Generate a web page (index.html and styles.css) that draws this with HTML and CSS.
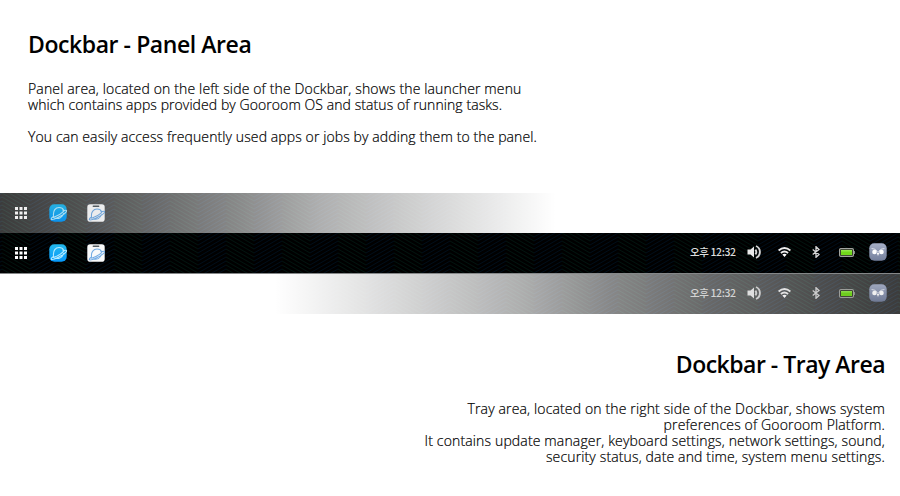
FILE: index.html
```
<!DOCTYPE html>
<html lang="en">
<head>
<meta charset="utf-8">
<title>Dockbar</title>
<link rel="stylesheet" href="styles.css">
</head>
<body>
<svg class="defs" width="0" height="0" aria-hidden="true">
  <defs>
    <linearGradient id="blue" x1="0" y1="0" x2="0" y2="1"><stop offset="0" stop-color="#23b9ed"/><stop offset="1" stop-color="#0698fb"/></linearGradient>
    <linearGradient id="owlbg" x1="0" y1="0" x2="0" y2="1"><stop offset="0" stop-color="#a6afc8"/><stop offset="1" stop-color="#747f9c"/></linearGradient>
    <pattern id="herringbone" x="30" width="56" height="4" patternUnits="userSpaceOnUse">
      <path d="M0 0L28 -16M0 4L28 -12M0 8L28 -8M0 12L28 -4M0 16L28 0M0 20L28 4" stroke="#000d1a"/>
      <path d="M28 0L56 16M28 4L56 20M28 -4L56 12M28 -8L56 8M28 -12L56 4M28 -16L56 0" stroke="#02140f"/>
    </pattern>
    <symbol id="grid" viewBox="0 0 12 12"><path d="M0 0h3v3H0zM4.500 0h3v3h-3zM9 0h3v3H9zM0 4.500h3v3H0zM4.500 4.500h3v3h-3zM9 4.500h3v3H9zM0 9h3v3H0zM4.500 9h3v3h-3zM9 9h3v3H9z" fill="#fff"/></symbol>
    <symbol id="planet" viewBox="0 0 18 18">
      <rect x=".3" y=".3" width="17.4" height="17.4" rx="5" fill="url(#blue)"/>
      <path d="M4.500 11.500C4 6.500 6.500 3.500 10 3.500c2.300 0 4 1.100 4.600 2.800M6 14.200c3.800 1.100 7.300-.8 8.600-4.700M14 6.800c2-.7 3.300-.8 3.700 0M17.500 7.500c-1 1.500-4.500 4-8.200 5.800C5.700 15 2.800 16.200 2.300 15.200c-.3-.7.6-1.700 2.200-2.800M4.300 13.500c3.700-1.200 7.700-3.400 10.400-6.100" fill="none" stroke="#b4eaff" stroke-width="1.150" stroke-linecap="round"/>
    </symbol>
    <symbol id="store" viewBox="0 0 18 18">
      <rect x=".3" y=".3" width="17.4" height="17.4" rx="2.800" fill="#f8f9fa"/>
      <rect x="5.600" y="1.600" width="6.800" height="1.400" rx=".7" fill="#555d63"/>
      <path d="M4.500 12.500C4 8 6.500 5 10 5c2.300 0 4 1 4.500 2.600M6.400 15c3.500 1 6.800-.8 8-4.300M14 7.800c2-.7 3.300-.8 3.700 0M17.500 8.500c-1 1.400-4.500 3.700-8.200 5.400-3.600 1.600-6.500 2.700-7 1.700-.3-.7.6-1.500 2.200-2.600M4.600 14.200c3.700-1.200 7.500-3.100 10.100-5.600" fill="none" stroke="#72abe4" stroke-width="1.050" stroke-linecap="round"/>
    </symbol>
    <symbol id="sound" viewBox="0 0 14 14"><path d="M.5 4.500h3L7 1.500v11L3.500 9.500h-3z" fill="#e9e9e9"/><path d="M8.400 4.600Q10.200 7 8.400 9.400M9 1c5.200 2.300 5.200 9.700 0 12" fill="none" stroke="#d6d6d6" stroke-width="1.900"/></symbol>
    <symbol id="wifi" viewBox="0 0 13 10"><g fill="none" stroke="#ededed" stroke-width="1.900"><path d="M.6 3.500Q6.500-1.300 12.400 3.500M2.900 5.900q3.600-2.900 7.200 0"/></g><path d="M4.300 7.500Q6.500 5.900 8.700 7.500L6.500 9.900z" fill="#fff"/></symbol>
    <symbol id="bluetooth" viewBox="0 0 8 12"><path d="M.7 3.400L7 8.500 4 11.300V.7l3 2.800L.7 8.600" fill="none" stroke="#d8d8d8" stroke-width="1.300"/></symbol>
    <symbol id="battery" viewBox="0 0 16 9"><rect x=".6" y=".6" width="13.800" height="7.800" rx="1.200" fill="#202a12" stroke="#a2a4a0" stroke-width="1.200"/><path d="M14.500 3h1.300v3h-1.300z" fill="#a2a4a0"/><path d="M2 2h11v5H2z" fill="#72d91b"/><path d="M2 2h11v1.500H2z" fill="#90e848"/></symbol>
    <symbol id="owl" viewBox="0 0 18 18"><rect x=".3" y=".3" width="17.400" height="17.400" rx="5" fill="url(#owlbg)"/><path d="M2.600 5.500Q6.500 5 9 9.500q2.500-4.500 6.400-4" fill="none" stroke="#dfe3ed" stroke-width="1"/><circle cx="5.500" cy="9" r="2.300" fill="#fff"/><circle cx="12.500" cy="9" r="2.300" fill="#fff"/><path d="M7.800 10h2.400L9 13z" fill="#fff"/></symbol>
  </defs>
</svg>

<section class="intro">
  <h2>Dockbar - Panel Area</h2>
  <p><span class="wide">Panel area, located on the left side of the Dockbar, shows the launcher menu</span><br><span class="tight">which contains apps provided by Gooroom OS and status of running tasks.</span></p>
  <p class="gap"><span class="mid">You can easily access frequently used apps or jobs by adding them to the panel.</span></p>
</section>

<div class="bars">
  <div class="bar bar-panel">
    <svg class="texture"><rect width="100%" height="100%" fill="url(#herringbone)"/></svg>
    <div class="launchers"><svg class="i-grid"><use href="#grid"/></svg><svg class="i-app"><use href="#planet"/></svg><svg class="i-app"><use href="#store"/></svg></div>
    <div class="fade"></div>
  </div>
  <div class="bar bar-full">
    <svg class="texture"><rect width="100%" height="100%" fill="url(#herringbone)"/></svg>
    <div class="launchers"><svg class="i-grid"><use href="#grid"/></svg><svg class="i-app"><use href="#planet"/></svg><svg class="i-app"><use href="#store"/></svg></div>
    <div class="tray"><span class="clock">오후 12:32</span><svg class="i-sound"><use href="#sound"/></svg><svg class="i-wifi"><use href="#wifi"/></svg><svg class="i-bt"><use href="#bluetooth"/></svg><svg class="i-bat"><use href="#battery"/></svg><svg class="i-app"><use href="#owl"/></svg></div>
  </div>
  <div class="bar bar-tray">
    <svg class="texture"><rect width="100%" height="100%" fill="url(#herringbone)"/></svg>
    <div class="fade"></div>
    <div class="tray"><span class="clock">오후 12:32</span><svg class="i-sound"><use href="#sound"/></svg><svg class="i-wifi"><use href="#wifi"/></svg><svg class="i-bt"><use href="#bluetooth"/></svg><svg class="i-bat"><use href="#battery"/></svg><svg class="i-app"><use href="#owl"/></svg></div>
  </div>
</div>

<section class="intro intro-tray">
  <h2>Dockbar - Tray Area</h2>
  <p><span class="wide">Tray area, located on the right side of the Dockbar, shows system</span><br><span class="wide">preferences of Gooroom Platform.</span><br><span class="wide">It contains update manager, keyboard settings, network settings, sound,</span><br><span class="wide">security status, date and time, system menu settings.</span></p>
</section>
</body>
</html>
```
FILE: styles.css
```
* { box-sizing: border-box; }
body { margin: 0; width: 900px; height: 496px; overflow: hidden; background: #fff; color: #000; font-family: "Open Sans", "Noto Sans", sans-serif; }
.defs { position: absolute; }
svg { display: block; flex: none; }

.intro { padding: 28px 28px 48px; white-space: nowrap; }
.intro-tray { padding: 34px 15px 0; text-align: right; }
h2 { margin: 0 0 21px; font-size: 23px; line-height: 32px; font-weight: 600; letter-spacing: -0.43px; }
.intro-tray h2 { letter-spacing: -0.5px; }
p { margin: 0; font-size: 14px; line-height: 16px; font-weight: 300; -webkit-text-stroke: 0.2px #000; }
.gap { margin-top: 16px; }
.wide { letter-spacing: 0.145px; }
.mid { letter-spacing: 0.105px; }
.tight { letter-spacing: 0.075px; }

.bar { position: relative; display: flex; align-items: flex-start; height: 40px; background: #000; }
.bar-full { height: 41px; border-bottom: 1px solid #858788; }
.bar-full .tray { margin-left: auto; }
.bar-tray { justify-content: flex-end; }
.texture { position: absolute; left: 0; top: 0; width: 100%; height: 100%; }
.fade { position: absolute; inset: 0; }
.bar-panel .fade { background: linear-gradient(90deg, #ffffff3c 0, #ffffff50 80px, #ffffff68 150px, #ffffff88 235px, #ffffffaf 320px, #ffffffca 400px, #ffffffe8 490px, #fff 555px); }
.bar-tray .fade { background: linear-gradient(270deg, #ffffff3c 0, #ffffff50 90px, #ffffff68 190px, #ffffff88 290px, #ffffffaf 380px, #ffffffca 460px, #ffffffe8 550px, #fff 625px); }
.bar-panel .launchers { z-index: 1; opacity: 0.92; }
.bar-tray .tray { opacity: 0.92; }
.launchers, .tray { position: relative; display: flex; align-items: center; }
.launchers { gap: 20px; padding-left: 15px; height: 39px; }
.bar-panel .launchers { height: 40px; }
.i-grid { width: 12px; height: 12px; margin-right: 2px; }
.i-app { width: 18px; height: 18px; }
.tray { height: 38px; padding-right: 13px; }
.clock { margin-right: 11px; width: 46px; color: #ddd; font-family: "Noto Sans CJK KR", sans-serif; font-size: 10.5px; line-height: 16px; font-weight: 500; letter-spacing: -0.4px; white-space: nowrap; }
.i-sound { width: 14px; height: 14px; margin-right: 17px; }
.i-wifi { width: 13px; height: 10px; margin-right: 21px; }
.i-bt { width: 8px; height: 12px; margin-right: 19px; }
.i-bat { width: 16px; height: 9px; margin-right: 14px; }
```
